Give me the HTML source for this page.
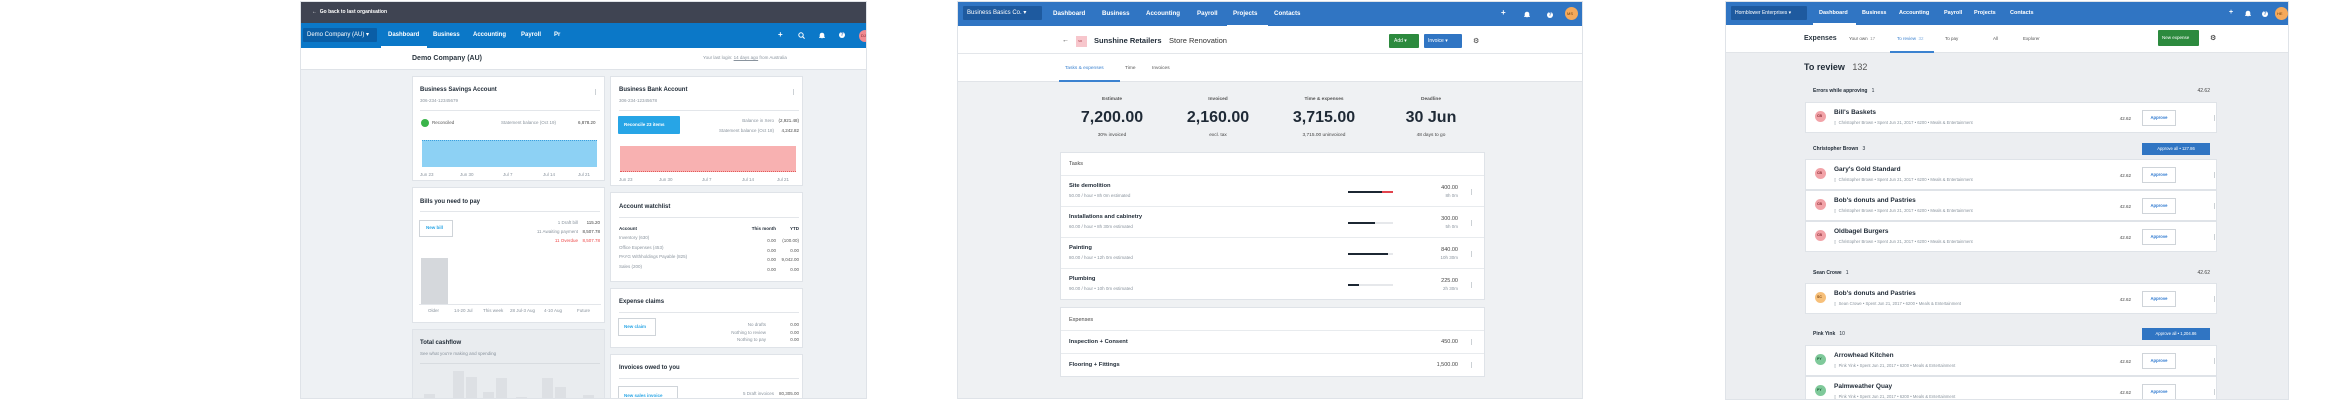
<!DOCTYPE html>
<html><head><meta charset="utf-8"><style>
*{margin:0;padding:0;box-sizing:border-box}
body{width:2350px;height:402px;background:#fff;position:relative;overflow:hidden;font-family:"Liberation Sans",sans-serif;color:#1f2a36}
div,span,svg{position:absolute}
.t{line-height:1;white-space:nowrap}
.b{font-weight:bold}
.w{color:#fff}
.g{color:#8a949e}
.card{background:#fff;border:1px solid #dfe3e8}
.r{text-align:right}
.kb{width:1px;height:6px;background:radial-gradient(circle,#9aa3ab 0.6px,transparent 0.7px) 0 0/1px 2px repeat-y}
.hp{width:6px;height:6px;border-radius:50%;background:#fff;color:#3075c3;font-size:5px;line-height:6px;text-align:center;font-weight:bold}
</style></head><body>

<!-- ============ PANEL 1 ============ -->
<div style="left:300px;top:1px;width:567px;height:398px;background:#eef1f4;border:1px solid #dfe3e8;overflow:hidden">
  <div style="left:0;top:0;width:567px;height:21px;background:#3f4452"></div>
  <div class="t w b" style="left:11px;top:8px;font-size:5px">←&nbsp; Go back to last organisation</div>
  <div style="left:0;top:21px;width:567px;height:25px;background:#0b78c8"></div>
  <div style="left:2px;top:26px;width:74px;height:14px;background:#0a5ea6;border-radius:1px"></div>
  <div class="t w" style="left:6px;top:30px;font-size:6px">Demo Company (AU) ▾</div>
  <div class="t w b" style="left:87px;top:30px;font-size:6px">Dashboard</div>
  <div style="left:80px;top:44px;width:46px;height:2px;background:#fff"></div>
  <div class="t w b" style="left:132px;top:30px;font-size:6px">Business</div>
  <div class="t w b" style="left:172px;top:30px;font-size:6px">Accounting</div>
  <div class="t w b" style="left:220px;top:30px;font-size:6px">Payroll</div>
  <div class="t w b" style="left:253px;top:30px;font-size:6px">Pr</div>
  <div class="t w b" style="left:477px;top:29px;font-size:8px">+</div>
  <svg style="left:497px;top:30px" width="7" height="7" viewBox="0 0 7 7"><circle cx="3" cy="3" r="2.2" fill="none" stroke="#fff" stroke-width="1"/><path d="M4.6 4.6L6.6 6.6" stroke="#fff" stroke-width="1"/></svg>
  <svg style="left:518px;top:30px" width="6" height="7" viewBox="0 0 6 7"><path d="M1 5V3a2 2 0 0 1 4 0v2l0.7 0.6H0.3z M2.3 6h1.4" fill="#fff" stroke="#fff" stroke-width="0.6"/></svg>
  <div class="hp" style="left:538px;top:30px">?</div>
  <div style="left:558px;top:28px;width:12px;height:12px;border-radius:50%;background:#f08a90"></div>
  <div class="t" style="left:560px;top:32px;font-size:4px;color:#7a1e25">DJ</div>
  <div style="left:0;top:46px;width:567px;height:22px;background:#fff;border-bottom:1px solid #dfe3e8"></div>
  <div class="t b" style="left:111px;top:53px;font-size:7px;color:#2b3640">Demo Company (AU)</div>
  <div class="t g" style="left:402px;top:54px;font-size:4.5px">Your last login: <u>14 days ago</u> from Australia</div>

  <div class="card" style="left:111px;top:74px;width:193px;height:105px"></div>
  <div class="t b" style="left:119px;top:85px;font-size:6px">Business Savings Account</div>
  <div class="t g" style="left:119px;top:97px;font-size:4.5px">306-234-12345679</div>
  <div class="kb" style="left:294px;top:87px"></div>
  <div style="left:119px;top:108px;width:180px;height:1px;background:#e3e6ea"></div>
  <div style="left:120px;top:117px;width:8px;height:8px;border-radius:50%;background:#3ab44a"></div>
  <div class="t g" style="left:131px;top:119px;font-size:4.5px;color:#555">Reconciled</div>
  <div class="t g" style="left:200px;top:119px;font-size:4.5px">Statement balance (Oct 19)</div>
  <div class="t" style="left:277px;top:119px;font-size:4.5px;color:#444">6,878.20</div>
  <div style="left:121px;top:138px;width:175px;height:27px;background:#8dd1f4;border-top:1px dotted #3aa0de"></div>
  <div class="t g" style="left:119px;top:171px;font-size:4.5px">Jun 23</div>
  <div class="t g" style="left:159px;top:171px;font-size:4.5px">Jun 30</div>
  <div class="t g" style="left:202px;top:171px;font-size:4.5px">Jul 7</div>
  <div class="t g" style="left:242px;top:171px;font-size:4.5px">Jul 14</div>
  <div class="t g" style="left:277px;top:171px;font-size:4.5px">Jul 21</div>

  <div class="card" style="left:309px;top:74px;width:193px;height:110px"></div>
  <div class="t b" style="left:318px;top:85px;font-size:6px">Business Bank Account</div>
  <div class="t g" style="left:318px;top:97px;font-size:4.5px">306-234-12345678</div>
  <div class="kb" style="left:492px;top:87px"></div>
  <div style="left:318px;top:108px;width:180px;height:1px;background:#e3e6ea"></div>
  <div style="left:317px;top:114px;width:62px;height:18px;background:#27a5e6;border-radius:1px"></div>
  <div class="t w b" style="left:323px;top:121px;font-size:4.5px">Reconcile 23 items</div>
  <div class="t g r" style="left:400px;top:117px;width:73px;font-size:4.5px">Balance in Xero</div>
  <div class="t r" style="left:475px;top:117px;width:23px;font-size:4.5px;color:#444">(2,921.48)</div>
  <div class="t g r" style="left:380px;top:127px;width:93px;font-size:4.5px">Statement balance (Oct 18)</div>
  <div class="t r" style="left:475px;top:127px;width:23px;font-size:4.5px;color:#444">4,242.82</div>
  <div style="left:319px;top:144px;width:176px;height:26px;background:#f8b1b1;border-bottom:1px dotted #e25a5a"></div>
  <div class="t g" style="left:318px;top:176px;font-size:4.5px">Jun 23</div>
  <div class="t g" style="left:358px;top:176px;font-size:4.5px">Jun 30</div>
  <div class="t g" style="left:401px;top:176px;font-size:4.5px">Jul 7</div>
  <div class="t g" style="left:441px;top:176px;font-size:4.5px">Jul 14</div>
  <div class="t g" style="left:476px;top:176px;font-size:4.5px">Jul 21</div>

  <div class="card" style="left:111px;top:185px;width:193px;height:136px"></div>
  <div class="t b" style="left:119px;top:197px;font-size:6px">Bills you need to pay</div>
  <div style="left:119px;top:209px;width:180px;height:1px;background:#e3e6ea"></div>
  <div style="left:118px;top:218px;width:34px;height:17px;border:1px solid #cfd4d9;background:#fff"></div>
  <div class="t b" style="left:125px;top:224px;font-size:4.5px;color:#2aa6e6">New bill</div>
  <div class="t g r" style="left:220px;top:219px;width:57px;font-size:4.5px">1 Draft bill</div>
  <div class="t r" style="left:278px;top:219px;width:21px;font-size:4.5px;color:#444">115.20</div>
  <div class="t g r" style="left:200px;top:228px;width:77px;font-size:4.5px">11 Awaiting payment</div>
  <div class="t r" style="left:278px;top:228px;width:21px;font-size:4.5px;color:#444">8,507.78</div>
  <div class="t r" style="left:220px;top:237px;width:57px;font-size:4.5px;color:#ee4a4a">11 Overdue</div>
  <div class="t r" style="left:278px;top:237px;width:21px;font-size:4.5px;color:#ee4a4a">8,507.78</div>
  <div style="left:120px;top:256px;width:27px;height:46px;background:#d5d8dc"></div>
  <div style="left:118px;top:302px;width:182px;height:1px;background:#e3e6ea"></div>
  <div class="t g" style="left:127px;top:307px;font-size:4.5px">Older</div>
  <div class="t g" style="left:153px;top:307px;font-size:4.5px">14-20 Jul</div>
  <div class="t g" style="left:182px;top:307px;font-size:4.5px">This week</div>
  <div class="t g" style="left:209px;top:307px;font-size:4.5px">28 Jul-3 Aug</div>
  <div class="t g" style="left:243px;top:307px;font-size:4.5px">4-10 Aug</div>
  <div class="t g" style="left:276px;top:307px;font-size:4.5px">Future</div>

  <div class="card" style="left:309px;top:190px;width:193px;height:90px"></div>
  <div class="t b" style="left:318px;top:202px;font-size:6px">Account watchlist</div>
  <div style="left:318px;top:215px;width:180px;height:1px;background:#e3e6ea"></div>
  <div class="t b" style="left:318px;top:225px;font-size:4.5px">Account</div>
  <div class="t b r" style="left:440px;top:225px;width:35px;font-size:4.5px">This month</div>
  <div class="t b r" style="left:478px;top:225px;width:20px;font-size:4.5px">YTD</div>
  <div class="t g" style="left:318px;top:234px;font-size:4.5px">Inventory (630)</div>
  <div class="t g" style="left:318px;top:244px;font-size:4.5px">Office Expenses (453)</div>
  <div class="t g" style="left:318px;top:253px;font-size:4.5px">PAYG Withholdings Payable (825)</div>
  <div class="t g" style="left:318px;top:263px;font-size:4.5px">Sales (200)</div>
  <div class="t r" style="left:440px;top:234px;width:35px;font-size:4.5px;line-height:9.6px;color:#555;white-space:normal">0.00<br>0.00<br>0.00<br>0.00</div>
  <div class="t r" style="left:468px;top:234px;width:30px;font-size:4.5px;line-height:9.6px;color:#555;white-space:normal">(100.00)<br>0.00<br>9,042.00<br>0.00</div>

  <div class="card" style="left:309px;top:286px;width:193px;height:60px"></div>
  <div class="t b" style="left:318px;top:297px;font-size:6px">Expense claims</div>
  <div style="left:318px;top:310px;width:180px;height:1px;background:#e3e6ea"></div>
  <div style="left:317px;top:316px;width:38px;height:18px;border:1px solid #cfd4d9;background:#fff"></div>
  <div class="t b" style="left:323px;top:323px;font-size:4.5px;color:#2aa6e6">New claim</div>
  <div class="t g r" style="left:400px;top:319px;width:65px;font-size:4.5px;line-height:7.5px;white-space:normal">No drafts<br>Nothing to review<br>Nothing to pay</div>
  <div class="t r" style="left:475px;top:319px;width:23px;font-size:4.5px;line-height:7.5px;color:#555;white-space:normal">0.00<br>0.00<br>0.00</div>

  <div style="left:111px;top:327px;width:193px;height:75px;background:#e9ecef;border:1px solid #dfe3e8"></div>
  <div class="t b" style="left:119px;top:338px;font-size:6px">Total cashflow</div>
  <div class="t g" style="left:119px;top:350px;font-size:4.5px">See what you're making and spending</div>
  <div style="left:119px;top:361px;width:180px;height:1px;background:#d8dce0"></div>
  <div style="left:123px;top:392px;width:11px;height:8px;background:#dde0e4"></div>
  <div style="left:152px;top:369px;width:11px;height:30px;background:#dde0e4"></div>
  <div style="left:165px;top:375px;width:11px;height:25px;background:#dde0e4"></div>
  <div style="left:182px;top:390px;width:11px;height:10px;background:#dde0e4"></div>
  <div style="left:195px;top:376px;width:11px;height:24px;background:#dde0e4"></div>
  <div style="left:215px;top:395px;width:11px;height:5px;background:#dde0e4"></div>
  <div style="left:241px;top:376px;width:11px;height:24px;background:#dde0e4"></div>
  <div style="left:254px;top:385px;width:11px;height:15px;background:#dde0e4"></div>
  <div style="left:282px;top:393px;width:11px;height:7px;background:#dde0e4"></div>

  <div class="card" style="left:309px;top:352px;width:193px;height:60px"></div>
  <div class="t b" style="left:318px;top:363px;font-size:6px">Invoices owed to you</div>
  <div style="left:318px;top:376px;width:180px;height:1px;background:#e3e6ea"></div>
  <div style="left:317px;top:384px;width:60px;height:18px;border:1px solid #cfd4d9;background:#fff"></div>
  <div class="t b" style="left:323px;top:392px;font-size:4.5px;color:#2aa6e6">New sales invoice</div>
  <div class="t g r" style="left:400px;top:387px;width:73px;font-size:4.5px;line-height:9px;white-space:normal">5 Draft invoices<br>10 Awaiting payment</div>
  <div class="t r" style="left:474px;top:387px;width:24px;font-size:4.5px;line-height:9px;color:#555;white-space:normal">80,305.00<br>33,019.05</div>
</div>

<!-- ============ PANEL 2 ============ -->
<div style="left:957px;top:1px;width:626px;height:398px;background:#eff1f3;border:1px solid #dfe3e8;overflow:hidden">
  <div style="left:0;top:0;width:626px;height:24px;background:#3075c3"></div>
  <div style="left:5px;top:4px;width:79px;height:14px;background:#1e5a9f;border-radius:1px"></div>
  <div class="t w" style="left:9px;top:8px;font-size:6px">Business Basics Co. ▾</div>
  <div class="t w b" style="left:95px;top:9px;font-size:6.2px">Dashboard</div>
  <div class="t w b" style="left:144px;top:9px;font-size:6.2px">Business</div>
  <div class="t w b" style="left:188px;top:9px;font-size:6.2px">Accounting</div>
  <div class="t w b" style="left:239px;top:9px;font-size:6.2px">Payroll</div>
  <div class="t w b" style="left:275px;top:9px;font-size:6.2px">Projects</div>
  <div style="left:269px;top:23px;width:41px;height:2px;background:#fff"></div>
  <div class="t w b" style="left:316px;top:9px;font-size:6.2px">Contacts</div>
  <div class="t w b" style="left:543px;top:7px;font-size:8px">+</div>
  <svg style="left:566px;top:9px" width="6" height="7" viewBox="0 0 6 7"><path d="M1 5V3a2 2 0 0 1 4 0v2l0.7 0.6H0.3z M2.3 6h1.4" fill="#fff" stroke="#fff" stroke-width="0.6"/></svg>
  <div class="hp" style="left:589px;top:10px">?</div>
  <div style="left:607px;top:5px;width:13px;height:13px;border-radius:50%;background:#f5a95a"></div>
  <div class="t" style="left:609px;top:10px;font-size:4px;color:#6b3a06">MS</div>
  <div style="left:0;top:24px;width:626px;height:28px;background:#fff;border-bottom:1px solid #e3e6ea"></div>
  <div class="t" style="left:104px;top:35px;font-size:7px;color:#444">←</div>
  <div style="left:118px;top:34px;width:11px;height:11px;background:#f7c6cc"></div>
  <div class="t" style="left:120px;top:38px;font-size:3px;color:#b0404d">SR</div>
  <div class="t b" style="left:136px;top:35px;font-size:7.5px">Sunshine Retailers</div>
  <div class="t" style="left:211px;top:35px;font-size:7.5px;color:#333">Store Renovation</div>
  <div style="left:431px;top:32px;width:30px;height:14px;background:#2c8a3e;border-radius:1px"></div>
  <div class="t w" style="left:436px;top:37px;font-size:5px">Add ▾</div>
  <div style="left:466px;top:32px;width:38px;height:14px;background:#3075c3;border-radius:1px"></div>
  <div class="t w" style="left:470px;top:37px;font-size:5px">Invoice ▾</div>
  <div class="t" style="left:515px;top:36px;font-size:7px;color:#333">⚙</div>
  <div style="left:0;top:52px;width:626px;height:28px;background:#fff;border-bottom:1px solid #e1e4e8"></div>
  <div class="t" style="left:107px;top:65px;font-size:4.8px;color:#3b82d0">Tasks &amp; expenses</div>
  <div class="t" style="left:167px;top:65px;font-size:4.8px;color:#555">Time</div>
  <div class="t" style="left:194px;top:65px;font-size:4.8px;color:#555">Invoices</div>
  <div style="left:101px;top:78px;width:61px;height:2px;background:#3b82d0"></div>

  <div class="t b" style="left:114px;top:96px;width:80px;text-align:center;font-size:4.8px;color:#555">Estimate</div>
  <div class="t b" style="left:104px;top:108px;width:100px;text-align:center;font-size:16px">7,200.00</div>
  <div class="t" style="left:104px;top:132px;width:100px;text-align:center;font-size:4.8px;color:#444">30% invoiced</div>
  <div class="t b" style="left:220px;top:96px;width:80px;text-align:center;font-size:4.8px;color:#555">Invoiced</div>
  <div class="t b" style="left:210px;top:108px;width:100px;text-align:center;font-size:16px">2,160.00</div>
  <div class="t" style="left:210px;top:132px;width:100px;text-align:center;font-size:4.8px;color:#444">excl. tax</div>
  <div class="t b" style="left:326px;top:96px;width:80px;text-align:center;font-size:4.8px;color:#555">Time &amp; expenses</div>
  <div class="t b" style="left:316px;top:108px;width:100px;text-align:center;font-size:16px">3,715.00</div>
  <div class="t" style="left:316px;top:132px;width:100px;text-align:center;font-size:4.8px;color:#444">3,715.00 uninvoiced</div>
  <div class="t b" style="left:433px;top:96px;width:80px;text-align:center;font-size:4.8px;color:#555">Deadline</div>
  <div class="t b" style="left:423px;top:108px;width:100px;text-align:center;font-size:16px">30 Jun</div>
  <div class="t" style="left:423px;top:132px;width:100px;text-align:center;font-size:4.8px;color:#444">48 days to go</div>

  <div class="card" style="left:102px;top:150px;width:425px;height:148px"></div>
  <div class="t" style="left:111px;top:160px;font-size:5.5px;color:#444">Tasks</div>
  <div style="left:103px;top:173px;width:423px;height:1px;background:#e8ebee"></div>
  <div style="left:103px;top:204px;width:423px;height:1px;background:#e8ebee"></div>
  <div style="left:103px;top:235px;width:423px;height:1px;background:#e8ebee"></div>
  <div style="left:103px;top:266px;width:423px;height:1px;background:#e8ebee"></div>

  <div class="t b" style="left:111px;top:182px;font-size:5.8px">Site demolition</div>
  <div class="t g" style="left:111px;top:192px;font-size:4.5px">50.00 / hour  •  8h 0m estimated</div>
  <div style="left:390px;top:189px;width:45px;height:1.5px;background:#e6e8eb"></div>
  <div style="left:390px;top:189px;width:34px;height:1.5px;background:#1c2733"></div>
  <div style="left:424px;top:189px;width:11px;height:1.5px;background:#e2434d"></div>
  <div class="t r" style="left:440px;top:184px;width:60px;font-size:5.5px;color:#444">400.00</div>
  <div class="t g r" style="left:440px;top:192px;width:60px;font-size:4.5px">8h 0m</div>
  <div class="kb" style="left:513px;top:187px"></div>

  <div class="t b" style="left:111px;top:213px;font-size:5.8px">Installations and cabinetry</div>
  <div class="t g" style="left:111px;top:223px;font-size:4.5px">60.00 / hour  •  8h 30m estimated</div>
  <div style="left:390px;top:220px;width:45px;height:1.5px;background:#e6e8eb"></div>
  <div style="left:390px;top:220px;width:27px;height:1.5px;background:#1c2733"></div>
  <div class="t r" style="left:440px;top:215px;width:60px;font-size:5.5px;color:#444">300.00</div>
  <div class="t g r" style="left:440px;top:223px;width:60px;font-size:4.5px">5h 0m</div>
  <div class="kb" style="left:513px;top:218px"></div>

  <div class="t b" style="left:111px;top:244px;font-size:5.8px">Painting</div>
  <div class="t g" style="left:111px;top:254px;font-size:4.5px">80.00 / hour  •  12h 0m estimated</div>
  <div style="left:390px;top:251px;width:45px;height:1.5px;background:#e6e8eb"></div>
  <div style="left:390px;top:251px;width:40px;height:1.5px;background:#1c2733"></div>
  <div class="t r" style="left:440px;top:246px;width:60px;font-size:5.5px;color:#444">840.00</div>
  <div class="t g r" style="left:440px;top:254px;width:60px;font-size:4.5px">10h 30m</div>
  <div class="kb" style="left:513px;top:249px"></div>

  <div class="t b" style="left:111px;top:275px;font-size:5.8px">Plumbing</div>
  <div class="t g" style="left:111px;top:285px;font-size:4.5px">90.00 / hour  •  10h 0m estimated</div>
  <div style="left:390px;top:282px;width:45px;height:1.5px;background:#e6e8eb"></div>
  <div style="left:390px;top:282px;width:11px;height:1.5px;background:#1c2733"></div>
  <div class="t r" style="left:440px;top:277px;width:60px;font-size:5.5px;color:#444">225.00</div>
  <div class="t g r" style="left:440px;top:285px;width:60px;font-size:4.5px">2h 30m</div>
  <div class="kb" style="left:513px;top:280px"></div>

  <div class="card" style="left:102px;top:305px;width:425px;height:70px"></div>
  <div class="t" style="left:111px;top:316px;font-size:5.5px;color:#444">Expenses</div>
  <div style="left:103px;top:328px;width:423px;height:1px;background:#e8ebee"></div>
  <div class="t b" style="left:111px;top:338px;font-size:5.8px">Inspection + Consent</div>
  <div class="t r" style="left:440px;top:338px;width:60px;font-size:5.5px;color:#444">450.00</div>
  <div class="kb" style="left:513px;top:337px"></div>
  <div style="left:103px;top:351px;width:423px;height:1px;background:#e8ebee"></div>
  <div class="t b" style="left:111px;top:361px;font-size:5.8px">Flooring + Fittings</div>
  <div class="t r" style="left:440px;top:361px;width:60px;font-size:5.5px;color:#444">1,500.00</div>
  <div class="kb" style="left:513px;top:360px"></div>
</div>

<!-- ============ PANEL 3 ============ -->
<div style="left:1725px;top:1px;width:564px;height:399px;background:#eceef1;border:1px solid #dfe3e8;overflow:hidden">
  <div style="left:0;top:0;width:564px;height:23px;background:#3075c3"></div>
  <div style="left:5px;top:4px;width:76px;height:14px;background:#1e5a9f;border-radius:1px"></div>
  <div class="t w" style="left:9px;top:9px;font-size:5px">Hornblower Enterprises ▾</div>
  <div class="t w b" style="left:93px;top:9px;font-size:5.5px">Dashboard</div>
  <div style="left:87px;top:21px;width:43px;height:2px;background:#fff"></div>
  <div class="t w b" style="left:136px;top:9px;font-size:5.5px">Business</div>
  <div class="t w b" style="left:173px;top:9px;font-size:5.5px">Accounting</div>
  <div class="t w b" style="left:218px;top:9px;font-size:5.5px">Payroll</div>
  <div class="t w b" style="left:248px;top:9px;font-size:5.5px">Projects</div>
  <div class="t w b" style="left:284px;top:9px;font-size:5.5px">Contacts</div>
  <div class="t w b" style="left:503px;top:7px;font-size:7px">+</div>
  <svg style="left:519px;top:8px" width="6" height="7" viewBox="0 0 6 7"><path d="M1 5V3a2 2 0 0 1 4 0v2l0.7 0.6H0.3z M2.3 6h1.4" fill="#fff" stroke="#fff" stroke-width="0.6"/></svg>
  <div class="hp" style="left:536px;top:9px">?</div>
  <div style="left:549px;top:5px;width:13px;height:13px;border-radius:50%;background:#f5a95a"></div>
  <div class="t" style="left:551px;top:10px;font-size:4px;color:#6b3a06">HE</div>
  <div style="left:0;top:23px;width:564px;height:28px;background:#fff;border-bottom:1px solid #e1e4e8"></div>
  <div class="t b" style="left:78px;top:33px;font-size:7px;color:#2b3640">Expenses</div>
  <div class="t" style="left:123px;top:35px;font-size:4.5px;color:#555">Your own <span style="position:static;color:#999">&nbsp;17</span></div>
  <div class="t" style="left:171px;top:35px;font-size:4.5px;color:#3b82d0">To review <span style="position:static;color:#8db6e4">&nbsp;32</span></div>
  <div class="t" style="left:219px;top:35px;font-size:4.5px;color:#555">To pay</div>
  <div class="t" style="left:267px;top:35px;font-size:4.5px;color:#555">All</div>
  <div class="t" style="left:297px;top:35px;font-size:4.5px;color:#555">Explorer</div>
  <div style="left:164px;top:49px;width:44px;height:2px;background:#3b82d0"></div>
  <div style="left:432px;top:28px;width:41px;height:16px;background:#2c8a3e;border-radius:1px"></div>
  <div class="t w" style="left:436px;top:34px;font-size:4.5px">New expense</div>
  <div class="t" style="left:484px;top:33px;font-size:7px;color:#111">⚙</div>

  <div class="t b" style="left:78px;top:61px;font-size:9px">To review <span style="position:static;font-weight:normal;color:#555">&nbsp;&nbsp;132</span></div>

  <div class="t b" style="left:87px;top:87px;font-size:5px">Errors while approving <span style="position:static;font-weight:normal">&nbsp;&nbsp;1</span></div>
  <div class="t r" style="left:430px;top:87px;width:54px;font-size:5px;color:#444">42.62</div>
  <div class="t b" style="left:87px;top:145px;font-size:5px">Christopher Brown <span style="position:static;font-weight:normal">&nbsp;&nbsp;3</span></div>
  <div style="left:416px;top:141px;width:68px;height:12px;background:#3075c3"></div>
  <div class="t w" style="left:416px;top:145px;width:68px;text-align:center;font-size:4.2px">Approve all • 127.86</div>
  <div class="t b" style="left:87px;top:269px;font-size:5px">Sean Crowe <span style="position:static;font-weight:normal">&nbsp;&nbsp;1</span></div>
  <div class="t r" style="left:430px;top:269px;width:54px;font-size:5px;color:#444">42.62</div>
  <div class="t b" style="left:87px;top:330px;font-size:5px">Pink Yink <span style="position:static;font-weight:normal">&nbsp;&nbsp;10</span></div>
  <div style="left:416px;top:326px;width:68px;height:12px;background:#3075c3"></div>
  <div class="t w" style="left:416px;top:330px;width:68px;text-align:center;font-size:4.2px">Approve all • 1,204.86</div>

  <div class="card" style="left:79px;top:100px;width:412px;height:31px"></div>
  <div class="card" style="left:79px;top:157px;width:412px;height:31px"></div>
  <div class="card" style="left:79px;top:188px;width:412px;height:31px"></div>
  <div class="card" style="left:79px;top:219px;width:412px;height:31px"></div>
  <div class="card" style="left:79px;top:281px;width:412px;height:31px"></div>
  <div class="card" style="left:79px;top:343px;width:412px;height:31px"></div>
  <div class="card" style="left:79px;top:374px;width:412px;height:31px"></div>

  <div style="left:89px;top:109px;width:11px;height:11px;border-radius:50%;background:#f2a3a8"></div><div class="t b" style="left:91px;top:113px;font-size:3.5px;color:#8a2a33">CB</div>
  <div class="t b" style="left:108px;top:108px;font-size:6.5px">Bill's Baskets</div>
  <div class="t g" style="left:108px;top:119px;font-size:4.2px">▯&nbsp; Christopher Brown • Spent Jun 21, 2017 • 6200 • Meals &amp; Entertainment</div>
  <div class="t r" style="left:380px;top:115px;width:25px;font-size:4.5px;color:#444">42.62</div>
  <div style="left:416px;top:108px;width:34px;height:16px;background:#fff;border:1px solid #cfd4d9"></div><div class="t b" style="left:416px;top:114px;width:34px;text-align:center;font-size:4.2px;color:#2f7ad0">Approve</div>
  <div class="kb" style="left:488px;top:113px"></div>

  <div style="left:89px;top:166px;width:11px;height:11px;border-radius:50%;background:#f2a3a8"></div><div class="t b" style="left:91px;top:170px;font-size:3.5px;color:#8a2a33">CB</div>
  <div class="t b" style="left:108px;top:165px;font-size:6.5px">Gary's Gold Standard</div>
  <div class="t g" style="left:108px;top:176px;font-size:4.2px">▯&nbsp; Christopher Brown • Spent Jun 21, 2017 • 6200 • Meals &amp; Entertainment</div>
  <div class="t r" style="left:380px;top:172px;width:25px;font-size:4.5px;color:#444">42.62</div>
  <div style="left:416px;top:165px;width:34px;height:16px;background:#fff;border:1px solid #cfd4d9"></div><div class="t b" style="left:416px;top:171px;width:34px;text-align:center;font-size:4.2px;color:#2f7ad0">Approve</div>
  <div class="kb" style="left:488px;top:170px"></div>

  <div style="left:89px;top:197px;width:11px;height:11px;border-radius:50%;background:#f2a3a8"></div><div class="t b" style="left:91px;top:201px;font-size:3.5px;color:#8a2a33">CB</div>
  <div class="t b" style="left:108px;top:196px;font-size:6.5px">Bob's donuts and Pastries</div>
  <div class="t g" style="left:108px;top:207px;font-size:4.2px">▯&nbsp; Christopher Brown • Spent Jun 21, 2017 • 6200 • Meals &amp; Entertainment</div>
  <div class="t r" style="left:380px;top:203px;width:25px;font-size:4.5px;color:#444">42.62</div>
  <div style="left:416px;top:196px;width:34px;height:16px;background:#fff;border:1px solid #cfd4d9"></div><div class="t b" style="left:416px;top:202px;width:34px;text-align:center;font-size:4.2px;color:#2f7ad0">Approve</div>
  <div class="kb" style="left:488px;top:201px"></div>

  <div style="left:89px;top:228px;width:11px;height:11px;border-radius:50%;background:#f2a3a8"></div><div class="t b" style="left:91px;top:232px;font-size:3.5px;color:#8a2a33">CB</div>
  <div class="t b" style="left:108px;top:227px;font-size:6.5px">Oldbagel Burgers</div>
  <div class="t g" style="left:108px;top:238px;font-size:4.2px">▯&nbsp; Christopher Brown • Spent Jun 21, 2017 • 6200 • Meals &amp; Entertainment</div>
  <div class="t r" style="left:380px;top:234px;width:25px;font-size:4.5px;color:#444">42.62</div>
  <div style="left:416px;top:227px;width:34px;height:16px;background:#fff;border:1px solid #cfd4d9"></div><div class="t b" style="left:416px;top:233px;width:34px;text-align:center;font-size:4.2px;color:#2f7ad0">Approve</div>
  <div class="kb" style="left:488px;top:232px"></div>

  <div style="left:89px;top:290px;width:11px;height:11px;border-radius:50%;background:#f7c07a"></div><div class="t b" style="left:91px;top:294px;font-size:3.5px;color:#7a4310">SC</div>
  <div class="t b" style="left:108px;top:289px;font-size:6.5px">Bob's donuts and Pastries</div>
  <div class="t g" style="left:108px;top:300px;font-size:4.2px">▯&nbsp; Sean Crowe • Spent Jun 21, 2017 • 6200 • Meals &amp; Entertainment</div>
  <div class="t r" style="left:380px;top:296px;width:25px;font-size:4.5px;color:#444">42.62</div>
  <div style="left:416px;top:289px;width:34px;height:16px;background:#fff;border:1px solid #cfd4d9"></div><div class="t b" style="left:416px;top:295px;width:34px;text-align:center;font-size:4.2px;color:#2f7ad0">Approve</div>
  <div class="kb" style="left:488px;top:294px"></div>

  <div style="left:89px;top:352px;width:11px;height:11px;border-radius:50%;background:#7fc99a"></div><div class="t b" style="left:91px;top:356px;font-size:3.5px;color:#1d5a33">PY</div>
  <div class="t b" style="left:108px;top:351px;font-size:6.5px">Arrowhead Kitchen</div>
  <div class="t g" style="left:108px;top:362px;font-size:4.2px">▯&nbsp; Pink Yink • Spent Jun 21, 2017 • 6200 • Meals &amp; Entertainment</div>
  <div class="t r" style="left:380px;top:358px;width:25px;font-size:4.5px;color:#444">42.62</div>
  <div style="left:416px;top:351px;width:34px;height:16px;background:#fff;border:1px solid #cfd4d9"></div><div class="t b" style="left:416px;top:357px;width:34px;text-align:center;font-size:4.2px;color:#2f7ad0">Approve</div>
  <div class="kb" style="left:488px;top:356px"></div>

  <div style="left:89px;top:383px;width:11px;height:11px;border-radius:50%;background:#7fc99a"></div><div class="t b" style="left:91px;top:387px;font-size:3.5px;color:#1d5a33">PY</div>
  <div class="t b" style="left:108px;top:382px;font-size:6.5px">Palmweather Quay</div>
  <div class="t g" style="left:108px;top:393px;font-size:4.2px">▯&nbsp; Pink Yink • Spent Jun 21, 2017 • 6200 • Meals &amp; Entertainment</div>
  <div class="t r" style="left:380px;top:389px;width:25px;font-size:4.5px;color:#444">42.62</div>
  <div style="left:416px;top:382px;width:34px;height:16px;background:#fff;border:1px solid #cfd4d9"></div><div class="t b" style="left:416px;top:388px;width:34px;text-align:center;font-size:4.2px;color:#2f7ad0">Approve</div>
  <div class="kb" style="left:488px;top:387px"></div>
</div>
</body></html>
